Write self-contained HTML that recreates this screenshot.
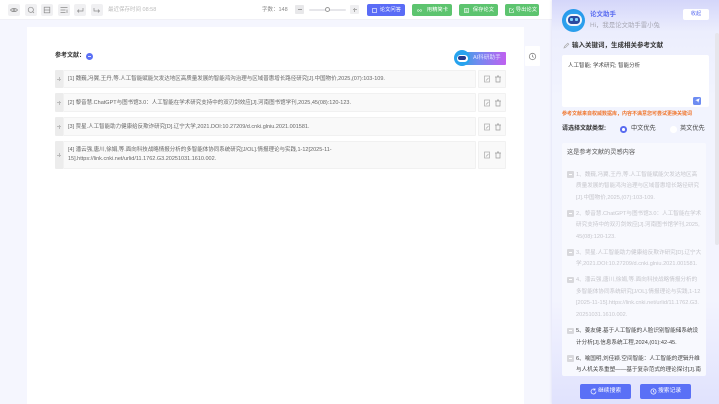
<!DOCTYPE html>
<html lang="zh"><head><meta charset="utf-8"><style>
html,body{margin:0;padding:0}
body{width:719px;height:404px;overflow:hidden;position:relative;background:#f5f6fe;font-family:"Liberation Sans","Noto Sans CJK SC",sans-serif}
div,span,svg{position:absolute;box-sizing:border-box}
#w{left:0;top:0;width:719px;height:404px;overflow:hidden;filter:blur(.35px)}
.t{white-space:nowrap;font-size:5px;line-height:8px;height:8px}
.ib{top:4px;width:12px;height:12px;background:#f0f0f2;border-radius:2px}
.ib svg{left:2px;top:2px;width:8px;height:8px}
.btn{top:4px;height:12px;border-radius:2px;color:#fff;background:#5dc46f;font-size:5.300px;line-height:12px;white-space:nowrap;text-align:right;padding-right:4px}
.btn svg{left:5px;top:3.500px;width:5px;height:5px}
.row{left:63px;width:413px;background:#f9f9f9;border:1px solid #f1f1f1;border-radius:1px}
.hd{left:55px;width:8px;background:#ececec;border-radius:1px 0 0 1px}
.hd i{position:absolute;left:2px;top:50%;margin-top:-2px;width:4px;height:4px;background:linear-gradient(#bbb,#bbb) center/4px 1px no-repeat,linear-gradient(#bbb,#bbb) center/1px 4px no-repeat}
.act{left:478px;width:28px;background:#f9f9f9;border:1px solid #f1f1f1;border-radius:1px}
.act svg{top:50%;margin-top:-4px;width:8px;height:8px}
.r{left:68px;color:#666;font-size:5.500px}
.g{left:576px;color:#c6c6cc;font-size:5.600px}
.d{left:576px;color:#444;font-size:5.600px}
.cb{left:567px;width:6.500px;height:6.500px;background:#d8d8dc;border-radius:1px}
.cb:after{content:"";position:absolute;left:1.500px;top:2.750px;width:3.500px;height:1px;background:#fff}
.bb{top:384px;height:15px;background:#5a70f6;border-radius:2px;color:#fff;font-size:5.800px;line-height:15px;white-space:nowrap}
</style></head><body><div id="w">
<div style="left:0;top:0;width:552px;height:20px;background:#fff;border-bottom:1px solid #f0f0f6"></div>
<div class="ib" style="left:8px"><svg viewBox="0 0 8 8" fill="none" stroke="#8a8a8a" stroke-width=".7"><path d="M.5 4C2 1.800 6 1.800 7.500 4 6 6.200 2 6.200.5 4z"/><circle cx="4" cy="4" r="1"/></svg></div>
<div class="ib" style="left:25px"><svg viewBox="0 0 8 8" fill="none" stroke="#8a8a8a" stroke-width=".7"><circle cx="3.800" cy="3.800" r="2.600"/><path d="M5.500 5.500 7 7"/></svg></div>
<div class="ib" style="left:41px"><svg viewBox="0 0 8 8" fill="none" stroke="#8a8a8a" stroke-width=".7"><rect x="1.200" y="1.200" width="5.600" height="5.600"/><path d="M1.200 4h5.600"/></svg></div>
<div class="ib" style="left:58px"><svg viewBox="0 0 8 8" fill="none" stroke="#8a8a8a" stroke-width=".7"><path d="M.5 1.500h7M.5 4h5M.5 6.500h5M7 3.500v3.500"/></svg></div>
<div class="ib" style="left:74px"><svg viewBox="0 0 8 8" fill="none" stroke="#8a8a8a" stroke-width=".7"><path d="M7 2v3H1.500M3 3.500 1.500 5 3 6.500"/></svg></div>
<div class="ib" style="left:91px"><svg viewBox="0 0 8 8" fill="none" stroke="#8a8a8a" stroke-width=".7"><path d="M1 2v3h5.500M5 3.500 6.500 5 5 6.500"/></svg></div>
<span class="t" style="left:108px;top:6px;color:#bbb;font-size:5.500px">最近保存时间 08:58</span>
<span class="t" style="left:262px;top:6px;color:#888;font-size:5.500px">字数：148</span>
<div style="left:295px;top:5px;width:9px;height:9px;background:#e8e8ea;border-radius:1px"></div>
<div style="left:297.500px;top:9px;width:4px;height:1px;background:#999"></div>
<div style="left:309px;top:8.500px;width:37px;height:2px;background:#e6e6ea;border-radius:1px"></div>
<div style="left:324.500px;top:7px;width:5px;height:5px;background:#fff;border:.7px solid #999;border-radius:50%"></div>
<div style="left:350px;top:5px;width:9px;height:9px;background:#efeff1;border-radius:1px"></div>
<div style="left:352.500px;top:9px;width:4px;height:1px;background:#aaa"></div>
<div style="left:354px;top:7.500px;width:1px;height:4px;background:#aaa"></div>
<div class="btn" style="left:367px;width:38px;background:#5a6cf6"><svg viewBox="0 0 5 5" fill="none" stroke="#fff" stroke-width=".6"><rect x=".5" y=".5" width="4" height="4"/></svg>论文问答</div>
<div class="btn" style="left:412px;width:40px"><svg viewBox="0 0 6 5" fill="none" stroke="#fff" stroke-width=".6"><circle cx="1.500" cy="2.500" r="1.100"/><circle cx="4.500" cy="2.500" r="1.100"/></svg>用精简卡</div>
<div class="btn" style="left:459px;width:39px"><svg viewBox="0 0 5 5" fill="none" stroke="#fff" stroke-width=".6"><rect x=".5" y=".5" width="4" height="4"/><path d="M1.500 2h2M1.500 3.200h2"/></svg>保存论文</div>
<div class="btn" style="left:505px;width:34px;padding-right:2px"><svg style="left:3.500px" viewBox="0 0 5 5" fill="none" stroke="#fff" stroke-width=".6"><path d="M2.500.5h-2v4h4v-2M2.500 2.500l2-2"/></svg>导出论文</div>

<div style="left:27px;top:27px;width:497px;height:377px;background:#fff"></div>
<span class="t" style="left:55px;top:52px;color:#333;font-weight:bold;font-size:6px">参考文献：</span>
<div style="left:86px;top:52.500px;width:7px;height:7px;border-radius:50%;background:#5a70f5"></div>
<div style="left:88px;top:55.500px;width:3px;height:1px;background:#dfe2ff"></div>

<div style="left:458px;top:52px;width:48px;height:13px;border-radius:1px;background:linear-gradient(90deg,#2aa4dc,#6f8cf0 40%,#c060f0)"></div>
<span class="t" style="left:473px;top:54px;color:#dfe2ff;font-size:5.600px">AI科研助手</span>
<div style="left:454px;top:50px;width:16px;height:16px;border-radius:50%;background:#27a3ee"></div>
<div style="left:456.500px;top:54.500px;width:11px;height:7px;border-radius:3.500px;background:#fff"></div>
<div style="left:458px;top:56px;width:8px;height:4px;border-radius:2px;background:#243a8c"></div>
<div style="left:525px;top:46px;width:15px;height:20px;background:#fff;border-radius:1px"></div>
<svg style="left:527.500px;top:52px" width="9" height="9" viewBox="0 0 9 9" fill="none" stroke="#888" stroke-width=".8"><circle cx="4.500" cy="4.500" r="3.200"/><path d="M4.500 2.800v1.900l1.200.7"/></svg>

<div class="hd" style="top:70px;height:18px"><i></i></div><div class="row" style="top:70px;height:18px"></div>
<div class="act" style="top:70px;height:18px"><svg style="left:4px" viewBox="0 0 8 8" fill="none" stroke="#aaa" stroke-width=".7"><rect x="1.500" y="1" width="5" height="6"/><path d="M3 5.500 5.500 3"/></svg><svg style="left:15px" viewBox="0 0 8 8" fill="none" stroke="#999" stroke-width=".7"><path d="M1 2h6M2 2v5h4V2M3 1h2"/></svg></div>
<span class="t r" style="top:75px">[1] 魏巍,冯翼,王丹,等.人工智能赋能欠发达地区高质量发展的智能鸿沟治理与区域普惠增长路径研究[J].中国物价,2025,(07):103-109.</span>
<div class="hd" style="top:93px;height:19px"><i></i></div><div class="row" style="top:93px;height:19px"></div>
<div class="act" style="top:93px;height:19px"><svg style="left:4px" viewBox="0 0 8 8" fill="none" stroke="#aaa" stroke-width=".7"><rect x="1.500" y="1" width="5" height="6"/><path d="M3 5.500 5.500 3"/></svg><svg style="left:15px" viewBox="0 0 8 8" fill="none" stroke="#999" stroke-width=".7"><path d="M1 2h6M2 2v5h4V2M3 1h2"/></svg></div>
<span class="t r" style="top:98.500px">[2] 黎音慧.ChatGPT与图书馆3.0：人工智能在学术研究支持中的双刃剑效应[J].河南图书馆学刊,2025,45(08):120-123.</span>
<div class="hd" style="top:117px;height:19px"><i></i></div><div class="row" style="top:117px;height:19px"></div>
<div class="act" style="top:117px;height:19px"><svg style="left:4px" viewBox="0 0 8 8" fill="none" stroke="#aaa" stroke-width=".7"><rect x="1.500" y="1" width="5" height="6"/><path d="M3 5.500 5.500 3"/></svg><svg style="left:15px" viewBox="0 0 8 8" fill="none" stroke="#999" stroke-width=".7"><path d="M1 2h6M2 2v5h4V2M3 1h2"/></svg></div>
<span class="t r" style="top:122.500px">[3] 贾星.人工智能助力健康给反欺诈研究[D].辽宁大学,2021.DOI:10.27209/d.cnki.glniu.2021.001581.</span>
<div class="hd" style="top:141px;height:28px"><i></i></div><div class="row" style="top:141px;height:28px"></div>
<div class="act" style="top:141px;height:28px"><svg style="left:4px" viewBox="0 0 8 8" fill="none" stroke="#aaa" stroke-width=".7"><rect x="1.500" y="1" width="5" height="6"/><path d="M3 5.500 5.500 3"/></svg><svg style="left:15px" viewBox="0 0 8 8" fill="none" stroke="#999" stroke-width=".7"><path d="M1 2h6M2 2v5h4V2M3 1h2"/></svg></div>
<span class="t r" style="top:146px">[4] 潘云强,唐川,徐娟,等.面向科技战略情报分析的多智能体协同系统研究[J/OL].情报理论与实践,1-12[2025-11-</span>
<span class="t r" style="top:155px">15].https://link.cnki.net/urlid/11.1762.G3.20251031.1610.002.</span>

<div style="left:552px;top:0;width:167px;height:404px;background:linear-gradient(180deg,#d4d6fa 0,#eceefd 32px,#f2f4fe 100px,#f3f4fe 300px,#e0e2fd 404px);box-shadow:-1px 0 2px rgba(120,120,200,.12)"></div>
<div style="left:715px;top:33px;width:4px;height:212px;background:#e6e6ec;border-radius:2px"></div>
<div style="left:562px;top:9px;width:23px;height:23px;border-radius:50%;background:radial-gradient(circle at 50% 55%,#3ab0f2,#1e90e8)"></div>
<div style="left:566px;top:14px;width:16px;height:12px;border-radius:6px;background:#f2f6fc"></div>
<div style="left:568px;top:16px;width:12px;height:7.500px;border-radius:3.500px;background:#2a4aa0"></div>
<div style="left:570px;top:18px;width:2.500px;height:3px;border-radius:1px;background:#7fd4ff"></div>
<div style="left:575px;top:18px;width:2.500px;height:3px;border-radius:1px;background:#7fd4ff"></div>
<span class="t" style="left:590px;top:10.500px;color:#5a6cf0;font-size:6.500px;font-weight:bold">论文助手</span>
<span class="t" style="left:590px;top:22px;color:#a8a8b4;font-size:6.400px">Hi，我是论文助手雷小兔</span>
<div style="left:683px;top:9px;width:26px;height:11px;background:#fff;border-radius:2px;color:#5a6cf0;font-size:5.200px;line-height:11px;text-align:center">收起</div>

<svg style="left:563px;top:42px" width="7" height="7" viewBox="0 0 7 7" fill="none" stroke="#aaa" stroke-width=".7"><path d="M1 6 1.500 4.500 4.800 1.200 5.800 2.200 2.500 5.500z"/></svg>
<span class="t" style="left:572px;top:41.500px;color:#333;font-weight:bold;font-size:6.500px">输入关键词，生成相关参考文献</span>
<div style="left:562px;top:55px;width:147px;height:52px;background:#fff;border-radius:2px"></div>
<span class="t" style="left:568px;top:62px;color:#444;font-size:5.500px">人工智能; 学术研究; 智能分析</span>
<div style="left:693px;top:96.500px;width:8px;height:8px;background:#6d8cf2;border-radius:1.500px"></div>
<svg style="left:694.500px;top:98px" width="5" height="5" viewBox="0 0 5 5"><path d="M.3 2.300 4.700.3 3.200 4.700 2.300 2.900z" fill="#fff"/></svg>
<span class="t" style="left:562px;top:110px;color:#f0762e;font-size:5px;font-weight:bold">参考文献来自权威数据库，内容不满意您可尝试更换关键词</span>
<span class="t" style="left:562px;top:125px;color:#333;font-size:6px;font-weight:bold">请选择文献类型:</span>
<div style="left:620px;top:126px;width:6.500px;height:6.500px;border-radius:50%;background:#5a6cf0"></div>
<div style="left:622px;top:128px;width:2.500px;height:2.500px;border-radius:50%;background:#fff"></div>
<span class="t" style="left:631px;top:125px;color:#444;font-size:6.200px">中文优先</span>
<div style="left:670px;top:126px;width:6.500px;height:6.500px;border-radius:50%;background:#fff"></div>
<span class="t" style="left:680px;top:125px;color:#444;font-size:6.200px">英文优先</span>

<div style="left:562px;top:143px;width:144px;height:233px;background:#f8f9fe;border-radius:2px"></div>
<span class="t" style="left:567px;top:149px;color:#555;font-size:6.200px">这是参考文献的灵感内容</span>
<div class="cb" style="top:171px"></div>
<span class="t g" style="top:171px">1、魏巍,冯翼,王丹,等.人工智能赋能欠发达地区高</span>
<span class="t g" style="top:182px">质量发展的智能鸿沟治理与区域普惠增长路径研究</span>
<span class="t g" style="top:193.500px">[J].中国物价,2025,(07):103-109.</span>
<div class="cb" style="top:210px"></div>
<span class="t g" style="top:209.500px">2、黎音慧.ChatGPT与图书馆3.0：人工智能在学术</span>
<span class="t g" style="top:221px">研究支持中的双刃剑效应[J].河南图书馆学刊,2025,</span>
<span class="t g" style="top:232.500px">45(08):120-123.</span>
<div class="cb" style="top:249px"></div>
<span class="t g" style="top:248.500px">3、贾星.人工智能助力健康给反欺诈研究[D].辽宁大</span>
<span class="t g" style="top:260px">学,2021.DOI:10.27209/d.cnki.glniu.2021.001581.</span>
<div class="cb" style="top:276.500px"></div>
<span class="t g" style="top:276px">4、潘云强,唐川,徐娟,等.面向科技战略情报分析的</span>
<span class="t g" style="top:287.500px">多智能体协同系统研究[J/OL].情报理论与实践,1-12</span>
<span class="t g" style="top:299px">[2025-11-15].https://link.cnki.net/urlid/11.1762.G3.</span>
<span class="t g" style="top:311px">20251031.1610.002.</span>
<div class="cb" style="top:327.500px"></div>
<span class="t d" style="top:327px">5、姜友健.基于人工智能的人脸识别智能储系统设</span>
<span class="t d" style="top:339px">计分析[J].信息系统工程,2024,(01):42-45.</span>
<div class="cb" style="top:355px"></div>
<span class="t d" style="top:354.500px">6、喻国明,刘佳颖.空间智能：人工智能的逻辑升维</span>
<span class="t d" style="top:366px">与人机关系重塑——基于复杂范式的理论探讨[J].南</span>

<div class="bb" style="left:580px;width:51px;padding-left:18px">继续搜索</div>
<svg style="left:590px;top:388px" width="7" height="7" viewBox="0 0 7 7" fill="none" stroke="#fff" stroke-width=".7"><path d="M6 3.500A2.500 2.500 0 1 1 5 1.500"/><path d="M5 .5v1.500H3.500"/></svg>
<div class="bb" style="left:640px;width:51px;padding-left:18px">搜索记录</div>
<svg style="left:650px;top:388px" width="7" height="7" viewBox="0 0 7 7" fill="none" stroke="#fff" stroke-width=".7"><circle cx="3.500" cy="3.500" r="2.600"/><path d="M3.500 2v1.700l1 .6"/></svg>
</div></body></html>
